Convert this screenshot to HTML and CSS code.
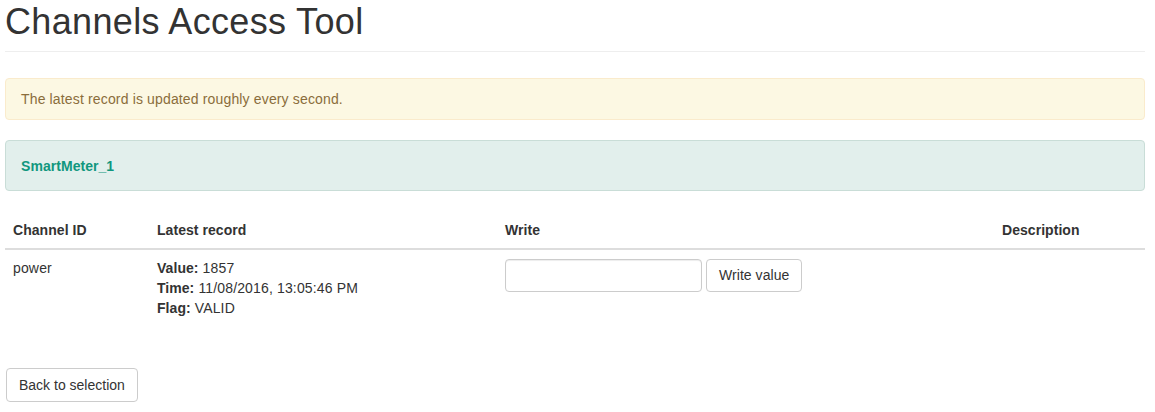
FILE: index.html
```html
<!DOCTYPE html>
<html>
<head>
<meta charset="utf-8">
<link rel="stylesheet" href="styles.css">
</head>
<body>
<div class="container">
  <div class="page-header">
    <h1>Channels Access Tool</h1>
  </div>
  <div class="alert">The latest record is updated roughly every second.</div>
  <div class="device-panel"><strong>SmartMeter_1</strong></div>
  <table class="channels">
    <thead>
      <tr>
        <th class="col-id">Channel ID</th>
        <th class="col-rec">Latest record</th>
        <th class="col-write">Write</th>
        <th class="col-desc">Description</th>
      </tr>
    </thead>
    <tbody>
      <tr>
        <td>power</td>
        <td>
          <div><b>Value:</b> 1857</div>
          <div><b>Time:</b> 11/08/2016, 13:05:46 PM</div>
          <div><b>Flag:</b> VALID</div>
        </td>
        <td>
          <div class="write-row">
            <input type="text" class="form-control">
            <button class="btn">Write value</button>
          </div>
        </td>
        <td></td>
      </tr>
    </tbody>
  </table>
  <button class="btn back">Back to selection</button>
</div>
</body>
</html>
```
FILE: styles.css
```css
* { box-sizing: border-box; }
html, body { margin: 0; padding: 0; background: #fff; }
body {
  font-family: "Liberation Sans", Arial, sans-serif;
  font-size: 14px;
  line-height: 20px;
  color: #333;
  letter-spacing: 0.15px;
}
b, strong, th { letter-spacing: 0.05px; }
.container { width: 1140px; margin-left: 5px; }
.page-header {
  padding-bottom: 9px;
  padding-top: 2px;
  border-bottom: 1px solid #eee;
  margin-bottom: 26px;
}
.page-header h1 {
  margin: 0;
  font-size: 36px;
  font-weight: 500;
  line-height: 39.6px;
  color: #333;
  letter-spacing: 0.35px;
}
.alert {
  padding: 10px 15px;
  background: #fcf8e3;
  border: 1px solid #faebcc;
  color: #8a6d3b;
  border-radius: 4px;
  margin-bottom: 20px;
}
.device-panel {
  padding: 15px;
  height: 51px;
  background: #e2efec;
  border: 1px solid #c9ddd7;
  border-radius: 4px;
  color: #11977e;
  margin-bottom: 21px;
}
.channels {
  width: 100%;
  border-collapse: collapse;
  border-spacing: 0;
  margin-bottom: 42px;
}
.channels th {
  text-align: left;
  font-weight: bold;
  padding: 8px;
  border-bottom: 2px solid #ddd;
  vertical-align: bottom;
}
.channels td { padding: 8px; vertical-align: top; }
.col-id { width: 144px; }
.col-rec { width: 348px; }
.col-write { width: 497px; }
.write-row { display: flex; gap: 4px; }
.form-control {
  width: 197px;
  height: 33px;
  margin-top: 1px;
  padding: 6px 12px;
  border: 1px solid #ccc;
  border-radius: 4px;
  font: inherit;
  box-shadow: inset 0 1px 1px rgba(0,0,0,.075);
}
.btn {
  display: inline-block;
  height: 34px;
  padding: 6px 12px;
  font-family: inherit;
  font-size: 14px;
  line-height: 20px;
  letter-spacing: 0.05px;
  color: #333;
  background: #fff;
  border: 1px solid #ccc;
  border-radius: 4px;
}
.write-row .btn { margin-top: 1px; height: 33px; padding-top: 5px; }
.back { margin-left: 1px; letter-spacing: 0; }
```
